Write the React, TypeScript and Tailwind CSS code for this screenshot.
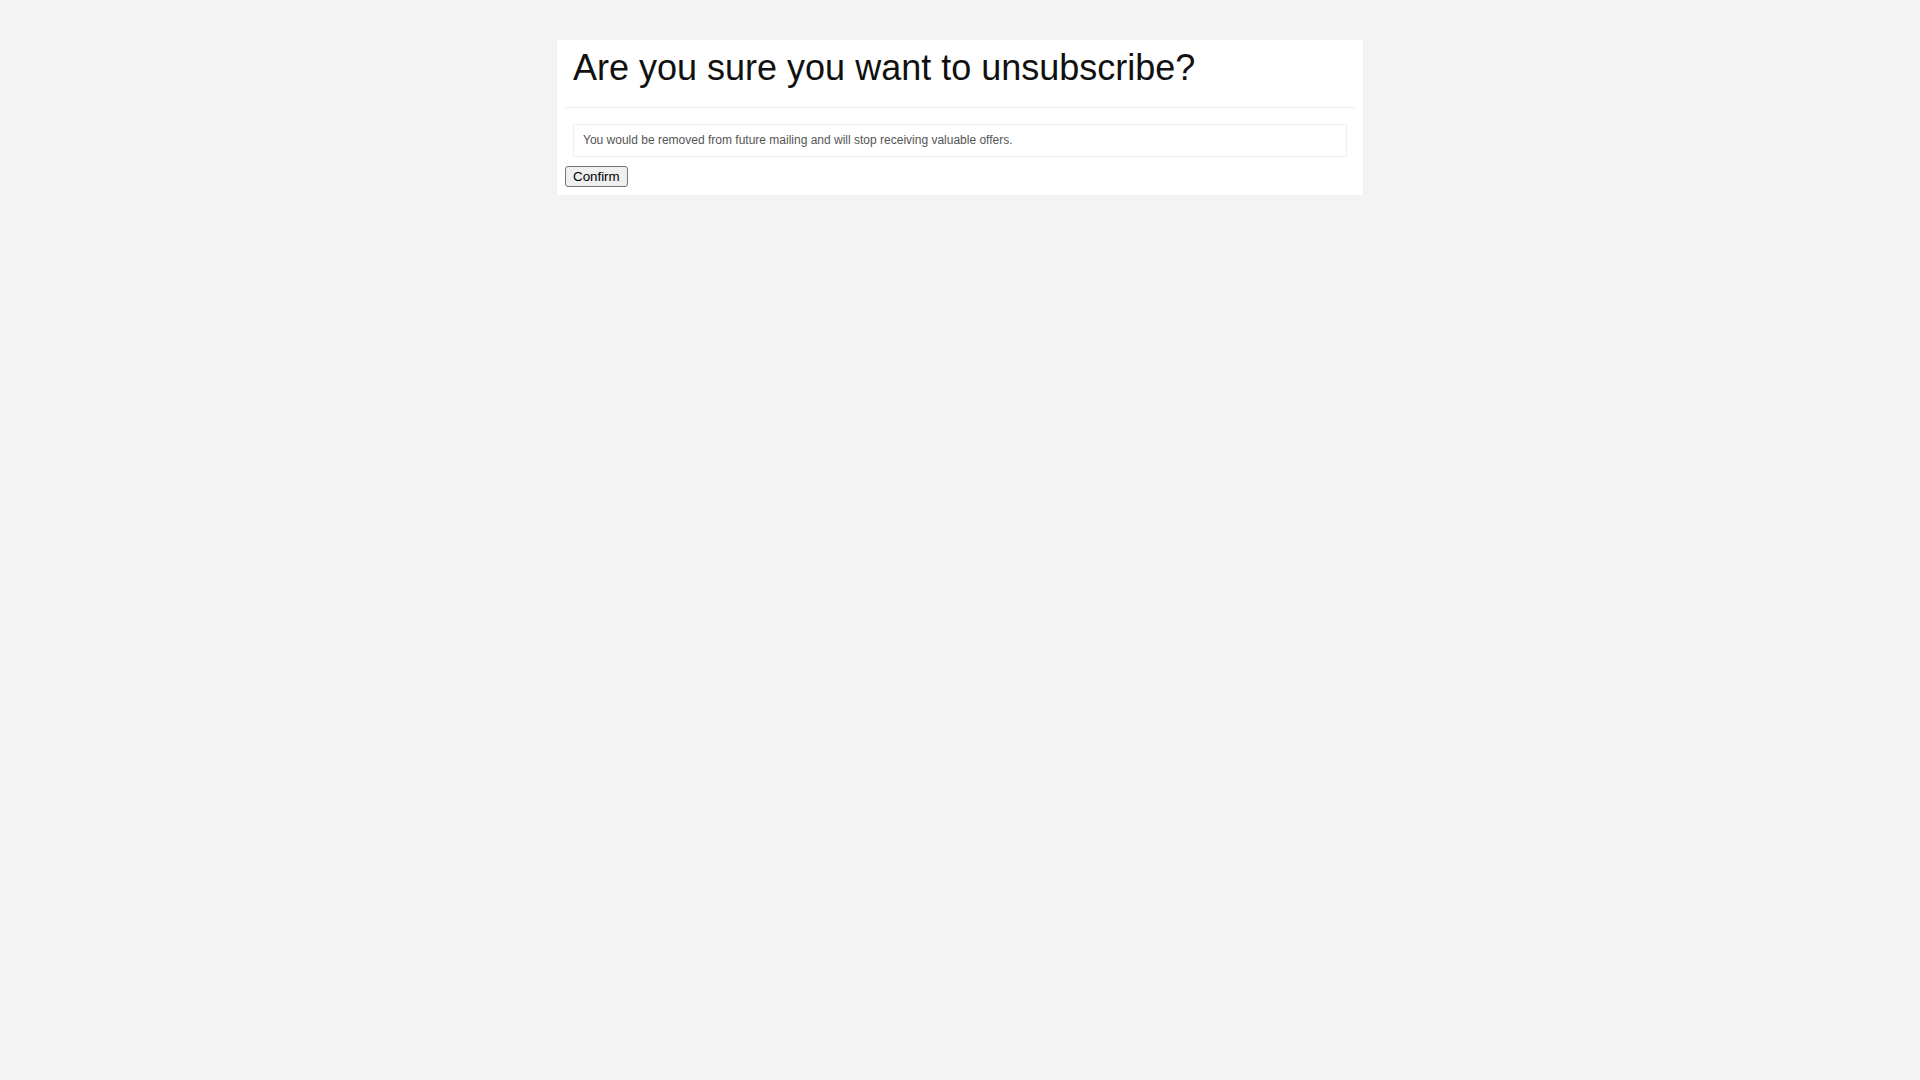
import React from 'react';

export default function App() {
  return (
    <div className="min-h-screen bg-[#f3f3f3] pt-[40px] font-['Liberation_Sans',Arial,sans-serif]">
      <div className="mx-auto w-[806px] bg-white px-[8px] pb-[8px]">
        <div className="border-b border-[#eeeeee] pb-[9px]">
          <h1 className="pt-[8px] pl-[8px] mb-[10px] text-[36px] leading-[1.1] font-normal text-[#111111]">
            Are you sure you want to unsubscribe?
          </h1>
        </div>
        <div className="mx-[8px] mt-[16px] border border-[#eeeeee] px-[9px] py-[7px] text-[12px] leading-[17px] text-[#555555]">
          You would be removed from future mailing and will stop receiving valuable offers.
        </div>
        <div className="mt-[9px] flex">
          <button
            type="button"
            className="h-[21px] rounded-[3px] border border-[#767676] bg-[#efefef] px-[7px] text-[13.33px] leading-[17px] text-black"
          >
            Confirm
          </button>
        </div>
      </div>
    </div>
  );
}
